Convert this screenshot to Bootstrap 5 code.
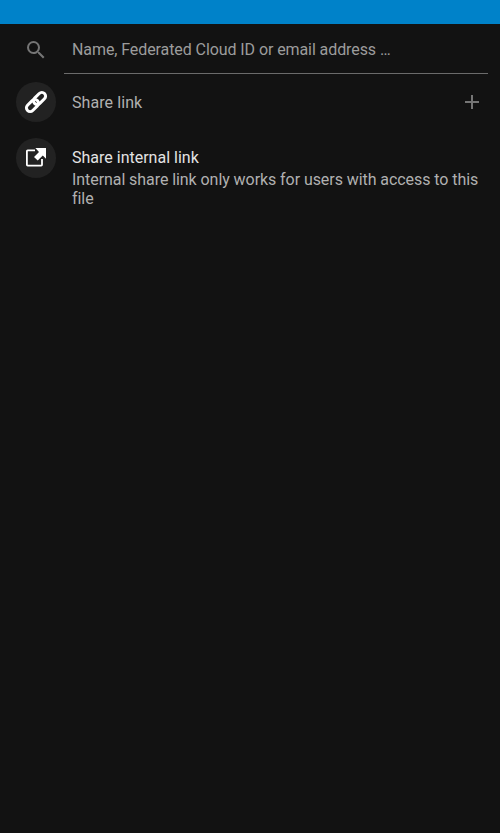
<!DOCTYPE html>
<html lang="en">
<head>
<meta charset="utf-8">
<meta name="viewport" content="width=device-width, initial-scale=1">
<title>Share</title>
<link href="https://cdn.jsdelivr.net/npm/bootstrap@5.3.0/dist/css/bootstrap.min.css" rel="stylesheet">
<style>
body { background: #121212; font-family: Roboto, sans-serif; font-size: 16px; line-height: 19px; color: #a5a5a5; }
.status-strip { height: 24px; background: #0082c9; }
.search-row { height: 50px; }
.search-icon { width: 64px; padding-left: 24px; padding-top: 2px; color: #757575; }
.search-field { margin-right: 12px; padding: 0 8px; border-bottom: 1px solid #6b6b6b; }
.search-field input { color: #a5a5a5; outline: 0; line-height: 19px; padding-top: 3px; letter-spacing: -.085px; }
.search-field input::placeholder { color: #9c9c9c; opacity: 1; }
.share-row { height: 56px; }
.share-label { color: #b0b0b0; letter-spacing: .08px; }
.share-avatar { width: 40px; height: 40px; background: #222; color: #fff; }
.plus-icon { color: #757575; }
.internal-title { color: #e3e3e3; margin-bottom: 3px; }
.internal-text { padding-top: 10px; color: #b0b0b0; }
.internal-note { letter-spacing: -.068px; }
</style>
</head>
<body>
<header class="status-strip"></header>
<main>
  <div class="search-row d-flex">
    <div class="search-icon d-flex align-items-center flex-shrink-0">
      <svg width="24" height="24" viewBox="0 0 24 24" fill="currentColor"><path d="M15.5 14h-.79l-.28-.27A6.47 6.47 0 0 0 16 9.5 6.5 6.5 0 1 0 9.5 16c1.61 0 3.09-.59 4.23-1.57l.27.28v.79l5 4.99L20.49 19l-4.99-5zm-6 0C7.01 14 5 11.99 5 9.5S7.01 5 9.5 5 14 7.01 14 9.5 11.99 14 9.5 14z"/></svg>
    </div>
    <div class="search-field d-flex align-items-center flex-grow-1">
      <input class="w-100 border-0 bg-transparent px-0" type="text" placeholder="Name, Federated Cloud ID or email address …" aria-label="Search">
    </div>
  </div>
  <div class="share-row d-flex align-items-center px-3 gap-3">
    <div class="share-avatar rounded-circle d-flex align-items-center justify-content-center flex-shrink-0">
      <svg width="24" height="24" viewBox="0 0 24 24" fill="none" stroke="currentColor" stroke-width="3"><g transform="rotate(-45 12 12)"><rect x="0" y="8.3" width="14" height="7.4" rx="3.7"/><rect x="10" y="8.3" width="14" height="7.4" rx="3.7"/></g></svg>
    </div>
    <div class="share-label flex-grow-1">Share link</div>
    <svg class="plus-icon" width="24" height="24" viewBox="0 0 24 24" fill="currentColor"><path d="M19 13h-6v6h-2v-6H5v-2h6V5h2v6h6z"/></svg>
  </div>
  <div class="d-flex align-items-start px-3 gap-3 pt-2">
    <div class="share-avatar rounded-circle d-flex align-items-center justify-content-center flex-shrink-0">
      <svg width="24" height="24" viewBox="0 0 24 24"><path d="M11 4.3H3.7Q2.9 4.3 2.9 5.1v13.7q0 .8.8.8h13.5q.8 0 .8-.8V13" fill="none" stroke="currentColor" stroke-width="1.8"/><path d="M11.3 2H22v10.7l-3.2-3.2-5.1 5.1-2.1-2.1-1.6-1.6 5-5z" fill="currentColor"/></svg>
    </div>
    <div class="internal-text">
      <div class="internal-title">Share internal link</div>
      <div class="internal-note">Internal share link only works for users with access to this file</div>
    </div>
  </div>
</main>
<script src="https://cdn.jsdelivr.net/npm/bootstrap@5.3.0/dist/js/bootstrap.bundle.min.js"></script>
</body>
</html>
